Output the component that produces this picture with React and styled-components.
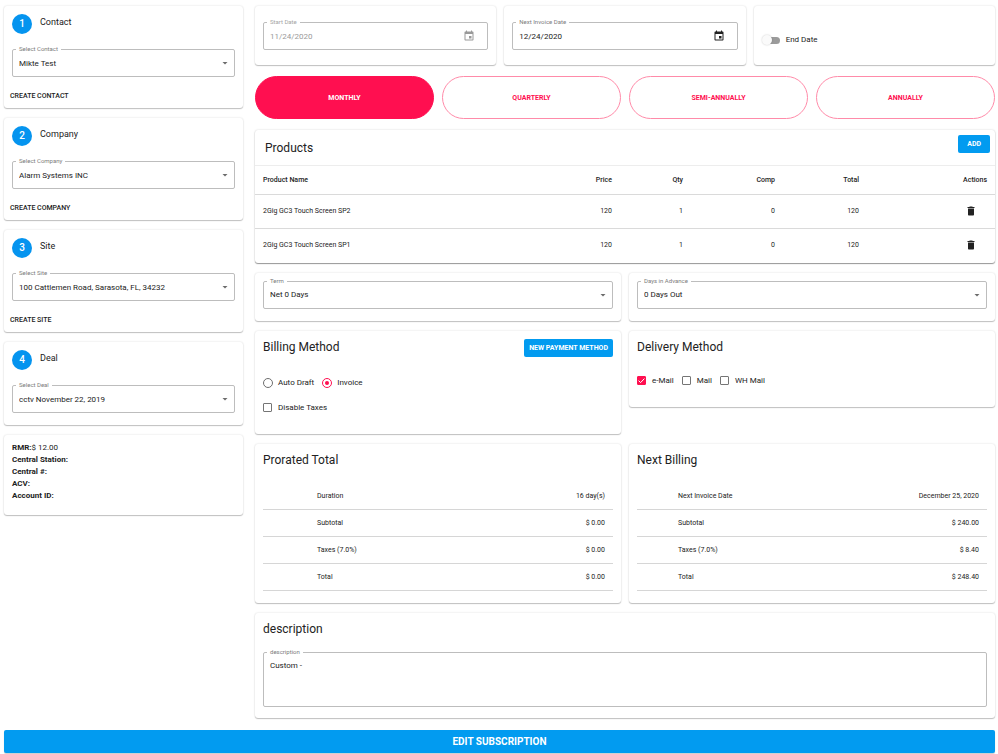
import React, { useState } from 'react';
import styled, { createGlobalStyle } from 'styled-components';

const blue = '#029bf0';
const pink = '#ff0f50';
const ink = '#222222';

const GlobalStyle = createGlobalStyle`
  *, *::before, *::after { box-sizing: border-box; }
  body { margin: 0; background: #ffffff; color: ${ink}; }
  body, button, input, select, textarea {
    font-family: Roboto, "Liberation Sans", sans-serif;
  }
  h2, dl, dd { margin: 0; }
`;

const Page = styled.form`
  padding: 6px 3px 2px 4px;
`;

const Columns = styled.div`
  display: grid;
  grid-template-columns: minmax(0, 239fr) minmax(0, 740fr);
  gap: 12px;
  align-items: start;
`;

const Sidebar = styled.aside`
  display: flex;
  flex-direction: column;
  gap: 10px;
`;

const Main = styled.main`
  display: flex;
  flex-direction: column;
  gap: 10px;
`;

const Row = styled.div`
  display: grid;
  grid-template-columns: repeat(${(p) => p.$count}, minmax(0, 1fr));
  gap: 8px;
  align-items: ${(p) => p.$align || 'stretch'};
`;

const Card = styled.section`
  background: #ffffff;
  border-radius: 3px;
  box-shadow: 0 1px 1px rgba(0, 0, 0, 0.22), 0 0 2px rgba(0, 0, 0, 0.16);
`;

const CardBody = styled.div`
  padding: ${(p) => p.$pad || '8px'};
`;

const StepHeader = styled.div`
  display: flex;
  gap: 8px;
  margin-bottom: 15px;
`;

const StepBadge = styled.span`
  width: 20px;
  height: 20px;
  border-radius: 50%;
  background: #0594ef;
  color: #ffffff;
  font-size: 10px;
  font-weight: 500;
  line-height: 20px;
  text-align: center;
`;

const StepTitle = styled.h2`
  font-size: 9px;
  font-weight: 400;
  line-height: 16px;
`;

const TextButton = styled.button`
  display: block;
  height: 24px;
  padding: 0 6px;
  border: 0;
  background: none;
  color: ${ink};
  font-size: 7px;
  font-weight: 500;
  text-transform: uppercase;
  cursor: pointer;
`;

const Field = styled.div`
  position: relative;
  color: ${(p) => (p.$disabled ? '#9a9a9a' : ink)};
`;

const FieldLabel = styled.label`
  position: absolute;
  top: -4px;
  left: 4px;
  padding: 0 3px;
  background: #ffffff;
  color: ${(p) => (p.$disabled ? '#a4a4a4' : '#7c7c7c')};
  font-size: 6px;
  line-height: 8px;
`;

const fieldBox = `
  display: block;
  width: 100%;
  margin: 0;
  border: 1px solid #bdbdbd;
  border-radius: 2px;
  background: #ffffff;
  color: inherit;
  font-size: 8px;
  outline-color: ${blue};
`;

const SelectBox = styled.select`
  ${fieldBox}
  appearance: none;
  height: 28px;
  padding: 0 20px 0 6px;
`;

const InputBox = styled.input`
  ${fieldBox}
  height: 28px;
  padding: 0 28px 0 6px;
  -webkit-text-fill-color: currentColor;
`;

const TextBox = styled.textarea`
  ${fieldBox}
  height: 55px;
  padding: 8px 6px;
  line-height: 10px;
  resize: none;
`;

const Icon = styled.svg`
  display: block;
  width: 12px;
  height: 12px;
  fill: currentColor;
`;

const Adornment = styled.span`
  position: absolute;
  top: 8px;
  right: ${(p) => p.$right};
  color: ${(p) => p.$color || 'inherit'};
  pointer-events: none;
`;

const Facts = styled.dl`
  padding: 7px 8px 13px;
  font-size: 8px;
  line-height: 12px;
`;

const Fact = styled.div`
  display: flex;
  dt { font-weight: 700; }
`;

const SwitchRow = styled.label`
  display: flex;
  align-items: center;
  gap: 6px;
  padding: 28px 8px 19px;
  font-size: 8px;
  line-height: 12px;
`;

const Switch = styled.input`
  appearance: none;
  position: relative;
  width: 18px;
  height: 7px;
  margin: 1px 0 0;
  border-radius: 4px;
  background: linear-gradient(90deg, transparent 4px, #9b9b9b 4px);
  cursor: pointer;
  &::before {
    content: '';
    position: absolute;
    top: -2px;
    left: 0;
    width: 10px;
    height: 10px;
    border-radius: 50%;
    background: #fafafa;
    box-shadow: 0 0 2px rgba(0, 0, 0, 0.22);
  }
  &:checked { background: #ff87a7; }
  &:checked::before { left: 8px; background: ${pink}; }
`;

const PeriodRow = styled(Row)`
  margin: 1px 0;
`;

const PeriodButton = styled.button`
  height: 43px;
  border: 1px solid ${(p) => (p.$active ? pink : '#ff8ba9')};
  border-radius: 22px;
  background: ${(p) => (p.$active ? pink : '#ffffff')};
  color: ${(p) => (p.$active ? '#ffffff' : pink)};
  font-size: 7px;
  font-weight: 700;
  text-transform: uppercase;
  cursor: pointer;
`;

const ProductsCard = styled(Card)`
  box-shadow: 0 1px 1px rgba(0, 0, 0, 0.38), 0 0 2px rgba(0, 0, 0, 0.18);
`;

const SectionHeader = styled.div`
  display: flex;
  justify-content: space-between;
  align-items: flex-start;
  padding: ${(p) => p.$pad || '0'};
`;

const SectionTitle = styled.h2`
  font-size: 12px;
  font-weight: 400;
  line-height: 16px;
`;

const SolidButton = styled.button`
  height: 18px;
  padding: 0 ${(p) => p.$padX};
  border: 0;
  border-radius: 2px;
  background: ${blue};
  color: #ffffff;
  font-size: 7px;
  font-weight: 700;
  text-transform: uppercase;
  cursor: pointer;
`;

const SubmitButton = styled(SolidButton)`
  display: block;
  width: 100%;
  height: 23px;
  margin-top: 12px;
  font-size: 10px;
  box-shadow: 0 1px 1px rgba(0, 0, 0, 0.2);
`;

const ProductTable = styled.table`
  width: 100%;
  border-collapse: collapse;
  table-layout: fixed;
  font-size: 7px;
  th, td {
    height: 34px;
    padding: 0 8px 1px;
    border-top: 1px solid #dadada;
    text-align: right;
  }
  th { height: 29px; border-top-color: #ededed; font-weight: 500; }
  th:first-child, td:first-child { text-align: left; }
`;

const Col = styled.col`
  width: ${(p) => p.$width};
`;

const IconButton = styled.button`
  display: inline-block;
  padding: 2px;
  margin-right: 8px;
  border: 0;
  background: none;
  color: ${ink};
  vertical-align: middle;
  cursor: pointer;
`;

const Options = styled.div`
  display: flex;
  align-items: center;
  gap: 8px;
`;

const OptionLabel = styled.label`
  display: flex;
  align-items: center;
  gap: 5px;
  font-size: 8px;
  line-height: 12px;
`;

const Radio = styled.input`
  appearance: none;
  width: 10px;
  height: 10px;
  margin: 0;
  padding: 2px;
  border: 1px solid #6e6e6e;
  border-radius: 50%;
  &:checked {
    border-color: ${pink};
    background: ${pink} content-box;
  }
`;

const CheckWrap = styled.span`
  position: relative;
  display: flex;
  padding-right: 1px;
`;

const CheckInput = styled.input`
  appearance: none;
  width: 9px;
  height: 9px;
  margin: 0;
  border: 1px solid #757575;
  border-radius: 1px;
  &:checked { border-color: ${pink}; background: ${pink}; }
  & + svg { display: none; }
  &:checked + svg { display: block; }
`;

const Tick = styled.svg`
  position: absolute;
  inset: 0 auto auto 0;
  width: 9px;
  height: 9px;
  fill: none;
  stroke: #ffffff;
  pointer-events: none;
`;

const TotalsTable = styled.table`
  width: 100%;
  border-collapse: collapse;
  font-size: 7px;
  th, td {
    height: 27px;
    padding: 0 8px;
    border-bottom: 1px solid #d6d6d6;
    font-weight: 400;
    text-align: right;
  }
  th { padding-left: ${(p) => p.$indent}; text-align: left; }
`;

function SelectField({ id, label, value }) {
  return (
    <Field>
      <SelectBox id={id} defaultValue={value}>
        <option>{value}</option>
      </SelectBox>
      <FieldLabel htmlFor={id}>{label}</FieldLabel>
      <Adornment $right="4px" $color="#6b6b6b">
        <Icon viewBox="0 0 24 24"><path d="M7 10l5 5 5-5z" /></Icon>
      </Adornment>
    </Field>
  );
}

function DateField({ id, label, value, disabled }) {
  return (
    <Field $disabled={disabled}>
      <InputBox id={id} type="text" defaultValue={value} disabled={disabled} />
      <FieldLabel htmlFor={id} $disabled={disabled}>{label}</FieldLabel>
      <Adornment $right="13px">
        <Icon viewBox="0 0 24 24">
          <path d="M17 12h-5v5h5v-5zM16 1v2H8V1H6v2H5c-1.11 0-1.99.9-1.99 2L3 19c0 1.1.89 2 2 2h14c1.1 0 2-.9 2-2V5c0-1.1-.9-2-2-2h-1V1h-2zm3 18H5V8h14v11z" />
        </Icon>
      </Adornment>
    </Field>
  );
}

function Checkbox({ label, defaultChecked }) {
  return (
    <OptionLabel>
      <CheckWrap>
        <CheckInput type="checkbox" defaultChecked={defaultChecked} />
        <Tick viewBox="0 0 9 9"><path d="M1.6 4.6l2 2 3.8-4" /></Tick>
      </CheckWrap>
      {label}
    </OptionLabel>
  );
}

function StepCard({ number, title, field, value, action }) {
  return (
    <Card>
      <CardBody $pad={action ? '8px 8px 7px' : '8px 8px 12px'}>
        <StepHeader>
          <StepBadge>{number}</StepBadge>
          <StepTitle>{title}</StepTitle>
        </StepHeader>
        <SelectField id={`step-${number}`} label={field} value={value} />
      </CardBody>
      {action && <TextButton type="button">{action}</TextButton>}
    </Card>
  );
}

function TotalsCard({ title, rows, indent }) {
  return (
    <Card>
      <CardBody $pad="8px 8px 12px">
        <SectionHeader $pad="0 0 15px">
          <SectionTitle>{title}</SectionTitle>
        </SectionHeader>
        <TotalsTable $indent={indent}>
          <tbody>
            {rows.map(([name, amount]) => (
              <tr key={name}>
                <th scope="row">{name}</th>
                <td>{amount}</td>
              </tr>
            ))}
          </tbody>
        </TotalsTable>
      </CardBody>
    </Card>
  );
}

const steps = [
  { title: 'Contact', field: 'Select Contact', value: 'Mikte Test', action: 'Create Contact' },
  { title: 'Company', field: 'Select Company', value: 'Alarm Systems INC', action: 'Create Company' },
  { title: 'Site', field: 'Select Site', value: '100 Cattlemen Road, Sarasota, FL, 34232', action: 'Create Site' },
  { title: 'Deal', field: 'Select Deal', value: 'cctv November 22, 2019' },
];

const facts = [
  ['RMR:', '$ 12.00'],
  ['Central Station:', ''],
  ['Central #:', ''],
  ['ACV:', ''],
  ['Account ID:', ''],
];

const periods = ['Monthly', 'Quarterly', 'Semi-Annually', 'Annually'];

const products = [
  { name: '2Gig GC3 Touch Screen SP2', price: 120, qty: 1, comp: 0, total: 120 },
  { name: '2Gig GC3 Touch Screen SP1', price: 120, qty: 1, comp: 0, total: 120 },
];

export default function App() {
  const [period, setPeriod] = useState('Monthly');

  return (
    <>
      <GlobalStyle />
      <Page onSubmit={(e) => e.preventDefault()}>
        <Columns>
          <Sidebar>
            {steps.map((step, i) => (
              <StepCard key={step.title} number={i + 1} {...step} />
            ))}
            <Card>
              <Facts>
                {facts.map(([name, value]) => (
                  <Fact key={name}>
                    <dt>{name}</dt>
                    <dd>{value}</dd>
                  </Fact>
                ))}
              </Facts>
            </Card>
          </Sidebar>

          <Main>
            <Row $count={3}>
              <Card>
                <CardBody $pad="16px 8px 15px">
                  <DateField id="start-date" label="Start Date" value="11/24/2020" disabled />
                </CardBody>
              </Card>
              <Card>
                <CardBody $pad="16px 8px 15px">
                  <DateField id="invoice-date" label="Next Invoice Date" value="12/24/2020" />
                </CardBody>
              </Card>
              <Card>
                <SwitchRow>
                  <Switch type="checkbox" role="switch" />
                  End Date
                </SwitchRow>
              </Card>
            </Row>

            <PeriodRow $count={4}>
              {periods.map((name) => (
                <PeriodButton
                  key={name}
                  type="button"
                  $active={name === period}
                  aria-pressed={name === period}
                  onClick={() => setPeriod(name)}
                >
                  {name}
                </PeriodButton>
              ))}
            </PeriodRow>

            <ProductsCard>
              <SectionHeader $pad="5px 5px 9px 10px">
                <CardBody $pad="5px 0 0">
                  <SectionTitle>Products</SectionTitle>
                </CardBody>
                <SolidButton type="button" $padX="9px">Add</SolidButton>
              </SectionHeader>
              <ProductTable>
                <colgroup>
                  <Col />
                  <Col $width="70px" />
                  <Col $width="71px" />
                  <Col $width="92px" />
                  <Col $width="84px" />
                  <Col $width="128px" />
                </colgroup>
                <thead>
                  <tr>
                    <th scope="col">Product Name</th>
                    <th scope="col">Price</th>
                    <th scope="col">Qty</th>
                    <th scope="col">Comp</th>
                    <th scope="col">Total</th>
                    <th scope="col">Actions</th>
                  </tr>
                </thead>
                <tbody>
                  {products.map((item) => (
                    <tr key={item.name}>
                      <td>{item.name}</td>
                      <td>{item.price}</td>
                      <td>{item.qty}</td>
                      <td>{item.comp}</td>
                      <td>{item.total}</td>
                      <td>
                        <IconButton type="button" aria-label={`Delete ${item.name}`}>
                          <Icon viewBox="0 0 24 24">
                            <path d="M6 19c0 1.1.9 2 2 2h8c1.1 0 2-.9 2-2V7H6v12zM19 4h-3.5l-1-1h-5l-1 1H5v2h14V4z" />
                          </Icon>
                        </IconButton>
                      </td>
                    </tr>
                  ))}
                </tbody>
              </ProductTable>
            </ProductsCard>

            <Row $count={2}>
              <Card>
                <CardBody $pad="8px 8px 12px">
                  <SelectField id="term" label="Term" value="Net 0 Days" />
                </CardBody>
              </Card>
              <Card>
                <CardBody $pad="8px 8px 12px">
                  <SelectField id="advance" label="Days in Advance" value="0 Days Out" />
                </CardBody>
              </Card>
            </Row>

            <Row $count={2} $align="start">
              <Card>
                <CardBody $pad="8px 8px 20px">
                  <SectionHeader $pad="0 0 20px">
                    <SectionTitle>Billing Method</SectionTitle>
                    <SolidButton type="button" $padX="5px">New Payment Method</SolidButton>
                  </SectionHeader>
                  <Options>
                    <OptionLabel>
                      <Radio type="radio" name="billing" />
                      Auto Draft
                    </OptionLabel>
                    <OptionLabel>
                      <Radio type="radio" name="billing" defaultChecked />
                      Invoice
                    </OptionLabel>
                  </Options>
                  <CardBody $pad="13px 0 0">
                    <Checkbox label="Disable Taxes" />
                  </CardBody>
                </CardBody>
              </Card>
              <Card>
                <CardBody $pad="8px 8px 20px">
                  <SectionHeader $pad="0 0 20px">
                    <SectionTitle>Delivery Method</SectionTitle>
                  </SectionHeader>
                  <Options>
                    <Checkbox label="e-Mail" defaultChecked />
                    <Checkbox label="Mail" />
                    <Checkbox label="WH Mail" />
                  </Options>
                </CardBody>
              </Card>
            </Row>

            <Row $count={2}>
              <TotalsCard
                title="Prorated Total"
                indent="54px"
                rows={[
                  ['Duration', '16 day(s)'],
                  ['Subtotal', '$ 0.00'],
                  ['Taxes (7.0%)', '$ 0.00'],
                  ['Total', '$ 0.00'],
                ]}
              />
              <TotalsCard
                title="Next Billing"
                indent="41px"
                rows={[
                  ['Next Invoice Date', 'December 25, 2020'],
                  ['Subtotal', '$ 240.00'],
                  ['Taxes (7.0%)', '$ 8.40'],
                  ['Total', '$ 248.40'],
                ]}
              />
            </Row>

            <Card>
              <CardBody $pad="8px 8px 11px">
                <SectionHeader $pad="0 0 15px">
                  <SectionTitle>description</SectionTitle>
                </SectionHeader>
                <Field>
                  <TextBox id="description" defaultValue="Custom -" />
                  <FieldLabel htmlFor="description">description</FieldLabel>
                </Field>
              </CardBody>
            </Card>
          </Main>
        </Columns>
        <SubmitButton type="submit" $padX="8px">Edit Subscription</SubmitButton>
      </Page>
    </>
  );
}
